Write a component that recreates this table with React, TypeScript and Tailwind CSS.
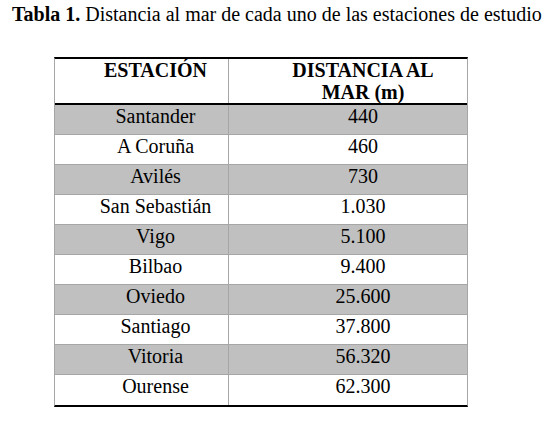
const rows = [
  ["Santander", "440"],
  ["A Coruña", "460"],
  ["Avilés", "730"],
  ["San Sebastián", "1.030"],
  ["Vigo", "5.100"],
  ["Bilbao", "9.400"],
  ["Oviedo", "25.600"],
  ["Santiago", "37.800"],
  ["Vitoria", "56.320"],
  ["Ourense", "62.300"],
];

export default function App() {
  return (
    <div className="w-[550px] h-[423px] bg-white text-black overflow-hidden font-['Liberation_Serif']">
      <div className="pt-[2px] pl-[12px] text-[20px] leading-[24px] whitespace-nowrap font-['Liberation_Serif']">
        <span className="font-bold font-['Liberation_Serif']">Tabla 1.</span> Distancia al mar de cada uno de las estaciones de estudio
      </div>

      <div className="ml-[54px] mt-[31px] w-[414px] border-t-2 border-b-2 border-t-black border-b-black border-l border-r border-l-[#a6a6a6] border-r-[#a6a6a6] text-[20px] leading-[22px]">
        <div className="flex h-[46px] border-b-2 border-black font-bold">
          <div className="w-[173px] pl-[28px] text-center font-['Liberation_Serif']">ESTACIÓN</div>
          <div className="flex-1 pl-[30px] text-center border-l border-[#a6a6a6] font-['Liberation_Serif']">
            DISTANCIA AL
            <br />
            MAR (m)
          </div>
        </div>
        {rows.map(([name, dist], i) => (
          <div
            key={name}
            className={`flex ${i < rows.length - 1 ? "h-[30px] border-b border-[#a6a6a6]" : "h-[30px]"} ${
              i % 2 === 0 ? "bg-[#c0c0c0]" : "bg-white"
            }`}
          >
            <div className="w-[173px] pl-[28px] text-center font-['Liberation_Serif']">{name}</div>
            <div className="flex-1 pl-[30px] text-center border-l border-[#a6a6a6] font-['Liberation_Serif']">
              {dist}
            </div>
          </div>
        ))}
      </div>
    </div>
  );
}
